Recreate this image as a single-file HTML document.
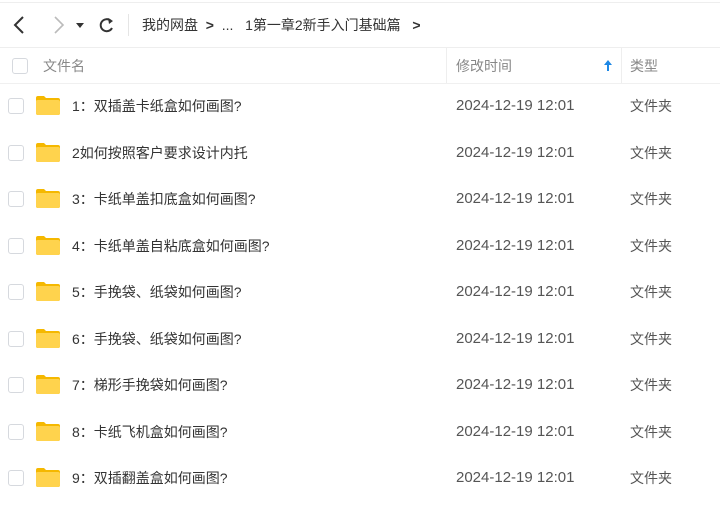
<!DOCTYPE html><html><head><meta charset="utf-8"><style>
body{margin:0;width:720px;height:506px;background:#fff;font-family:"Liberation Sans","Noto Sans CJK SC",sans-serif;overflow:hidden;position:relative;color:#333}
.abs{position:absolute}
.cb{position:absolute;left:8px;width:14px;height:14px;border:1px solid #d6d9de;border-radius:3px;background:#fff}
.name{position:absolute;left:72px;font-size:14px;color:#333;line-height:20px}
.time{position:absolute;left:456px;font-size:15px;color:#555;line-height:20px}
.type{position:absolute;left:630px;font-size:14px;color:#555;line-height:20px}
.fold{position:absolute;left:36px;width:24px;height:20px}
</style></head><body>
<div class="abs" style="left:0;top:2px;width:720px;height:1px;background:#eee"></div>
<svg class="abs" style="left:8px;top:14px" width="120" height="22" viewBox="0 0 120 22">
<path d="M15 3 L7 11 L15 19" stroke="#333" stroke-width="2" fill="none"/>
<path d="M47 3 L55 11 L47 19" stroke="#bbb" stroke-width="1.6" fill="none"/>
<path d="M68 9 L76 9 L72 14 Z" fill="#333"/>
<path d="M103 7 A6 6 0 1 0 104 14" stroke="#333" stroke-width="2" fill="none"/>
<path d="M100 4 L105 7 L101 10Z" fill="#333"/>
</svg>
<div class="abs" style="left:128px;top:14px;width:1px;height:22px;background:#e5e5e5"></div>
<div class="abs" style="left:142px;top:15px;font-size:14px;line-height:20px;color:#333">我的网盘&nbsp;&nbsp;<b>&gt;</b>&nbsp;&nbsp;...&nbsp;&nbsp;&nbsp;1第一章2新手入门基础篇&nbsp;&nbsp;&nbsp;<b>&gt;</b></div>
<div class="abs" style="left:0;top:47px;width:720px;height:1px;background:#eee"></div>
<div class="abs" style="left:0;top:83px;width:720px;height:1px;background:#f0f0f0"></div>
<div class="abs" style="left:446px;top:48px;width:1px;height:35px;background:#eee"></div>
<div class="abs" style="left:621px;top:48px;width:1px;height:35px;background:#eee"></div>
<div class="cb" style="left:12px;top:58px"></div>
<div class="abs" style="left:43px;top:56px;font-size:14px;line-height:20px;color:#888">文件名</div>
<div class="abs" style="left:456px;top:56px;font-size:14px;line-height:20px;color:#888">修改时间</div>
<svg class="abs" style="left:603px;top:59px" width="10" height="14"><path d="M5 1 L9 6 L6 6 L6 12 L4 12 L4 6 L1 6Z" fill="#1e88e5"/></svg>
<div class="abs" style="left:630px;top:56px;font-size:14px;line-height:20px;color:#888">类型</div>
<div id="rows"></div>
<script>
var n=["1：双插盖卡纸盒如何画图?","2如何按照客户要求设计内托","3：卡纸单盖扣底盒如何画图?","4：卡纸单盖自粘底盒如何画图?","5：手挽袋、纸袋如何画图?","6：手挽袋、纸袋如何画图?","7：梯形手挽袋如何画图?","8：卡纸飞机盒如何画图?","9：双插翻盖盒如何画图?"];
var h="";n.forEach(function(t,i){var c=106+i*46.5;
h+='<div class="cb" style="top:'+(c-8)+'px"></div>'+
'<svg class="fold" style="top:'+(c-11)+'px" viewBox="0 0 24 20"><path d="M0 3 Q0 1 2 1 L8 1 L10 3 L22 3 Q24 3 24 5 L24 18 Q24 20 22 20 L2 20 Q0 20 0 18Z" fill="#f5b800"/><path d="M0 6 Q0 5 2 5 L22 5 Q24 5 24 7 L24 18 Q24 20 22 20 L2 20 Q0 20 0 18Z" fill="#ffd34d"/></svg>'+
'<div class="name" style="top:'+(c-10)+'px">'+t+'</div><div class="time" style="top:'+(c-10)+'px">2024-12-19 12:01</div><div class="type" style="top:'+(c-10)+'px">文件夹</div>';});
document.getElementById("rows").innerHTML=h;
</script>
</body></html>
